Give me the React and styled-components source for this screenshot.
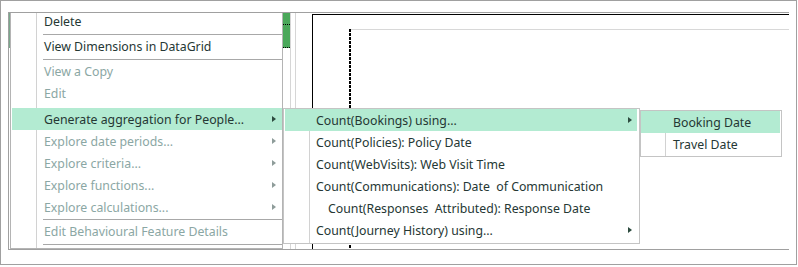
import React from 'react';
import styled, { createGlobalStyle } from 'styled-components';

const Global = createGlobalStyle`
  html, body { margin: 0; padding: 0; background: #fff; }
  body { font-family: "Noto Sans", "Open Sans", sans-serif; }
  #root { width: 798px; height: 267px; }
`;

const Frame = styled.div`
  width: 797px;
  height: 265px;
  box-sizing: border-box;
  border: 1px solid #a0a0a0;
  padding: 11px 0 0 7px;
  background: #fff;
`;

const Panel = styled.div`
  position: relative;
  overflow: hidden;
  width: 781px;
  height: 238px;
  box-sizing: border-box;
  border-top: 1px solid #a0a0a0;
  border-left: 1px solid #a0a0a0;
  border-bottom: 1px solid #a0a0a0;
  display: flex;
  align-items: stretch;
`;

const LeftPane = styled.div`
  width: 274px;
  flex: none;
`;

const LeftThumb = styled.div`
  width: 1px;
  height: 35px;
  background: #7aa88c;
`;

const ScrollCol = styled.div`
  display: flex;
  flex: none;
  margin-right: 16px;
`;

const Track = styled.div`
  width: ${p => p.$w}px;
  border-right: 1px solid #d6d6d6;
`;

const Thumb = styled.div`
  height: 35px;
  background: #4aa85a;
  border-bottom: 1px dotted #000;
  box-sizing: border-box;
  position: relative;
  &::before {
    content: "";
    position: absolute;
    left: 0;
    right: 0;
    top: 11px;
    border-top: 1px dotted #000;
  }
`;

const Canvas = styled.div`
  flex: 1;
  margin-top: 1px;
  border-top: 1px solid #000;
  border-left: 1px solid #000;
  padding: 14px 0 0 36px;
  display: flex;
`;

const Sheet = styled.div`
  flex: 1;
  display: flex;
`;

const DashedEdge = styled.div`
  width: 2px;
  flex: none;
  background: repeating-linear-gradient(to bottom, #000 0 3px, #fff 3px 4px);
`;

const SheetBody = styled.div`
  flex: 1;
  border-top: 1px solid #d8d8d8;
`;

const Menu = styled.div`
  position: absolute;
  left: ${p => p.$left}px;
  top: ${p => p.$top}px;
  width: ${p => p.$width}px;
  height: ${p => p.$height}px;
  box-sizing: border-box;
  border: 1px solid ${p => p.$border || '#c4c4c4'};
  padding-bottom: ${p => p.$pb || 0}px;
  background: #fff linear-gradient(to right, transparent ${p => p.$gutter}px, #d2d2d2 ${p => p.$gutter}px, #d2d2d2 ${p => p.$gutter + 1}px, transparent ${p => p.$gutter + 1}px);
  display: flex;
  flex-direction: column;
`;

const Item = styled.div`
  position: relative;
  height: 22px;
  line-height: 24px;
  flex: none;
  font-size: 12.3px;
  white-space: pre;
  padding-left: ${p => p.$pad}px;
  margin: 0 ${p => p.$mr || 0}px 0 ${p => p.$ml || 0}px;
  color: ${p => (p.$disabled ? '#8ba7a4' : '#253734')};
  background: ${p => (p.$active ? '#b3ebd2' : 'transparent')};
`;

const Arrow = styled.span`
  position: absolute;
  right: ${p => p.$right}px;
  top: 8px;
  width: 0;
  height: 0;
  border-top: 3px solid transparent;
  border-bottom: 3px solid transparent;
  border-left: 4px solid ${p => (p.$disabled ? '#8e9c9a' : '#2c4a3e')};
`;

const Separator = styled.div`
  flex: none;
  height: 1px;
  background: ${p => (p.$hidden ? 'transparent' : '#a8a8a8')};
  margin: ${p => p.$top}px 0 0 32px;
`;

const MAIN = [
  { t: 'Delete' },
  { sep: 2 },
  { t: 'View Dimensions in DataGrid' },
  { sep: 2 },
  { t: 'View a Copy', d: true },
  { t: 'Edit', d: true },
  { sep: 3, hidden: true },
  { t: 'Generate aggregation for People...', a: true, sub: true },
  { t: 'Explore date periods...', d: true, sub: true },
  { t: 'Explore criteria...', d: true, sub: true },
  { t: 'Explore functions...', d: true, sub: true },
  { t: 'Explore calculations...', d: true, sub: true },
  { sep: 1 },
  { t: 'Edit Behavioural Feature Details', d: true },
  { sep: 2 },
];

const SUB1 = [
  { t: 'Count(Bookings) using...', a: true, sub: true },
  { t: 'Count(Policies): Policy Date' },
  { t: 'Count(WebVisits): Web Visit Time' },
  { t: 'Count(Communications): Date  of Communication' },
  { t: 'Count(Responses  Attributed): Response Date', indent: 12 },
  { t: 'Count(Journey History) using...', sub: true },
];

const SUB2 = [{ t: 'Booking Date', a: true }, { t: 'Travel Date' }];

function renderItems(items, { pad, ml, mr, arrowRight }) {
  return items.map((it, i) =>
    it.sep !== undefined ? (
      <Separator key={i} $top={it.sep} $hidden={it.hidden} />
    ) : (
      <Item
        key={i}
        $pad={pad + (it.indent || 0)}
        $ml={ml}
        $mr={mr}
        $disabled={it.d}
        $active={it.a}
      >
        {it.t}
        {it.sub && <Arrow $right={arrowRight} $disabled={it.d} />}
      </Item>
    )
  );
}

export default function App() {
  return (
    <>
      <Global />
      <Frame>
        <Panel>
          <LeftPane>
            <LeftThumb />
          </LeftPane>
          <ScrollCol>
            <Track $w={7}>
              <Thumb />
            </Track>
            <Track $w={4} />
          </ScrollCol>
          <Canvas>
            <Sheet>
              <DashedEdge />
              <SheetBody />
            </Sheet>
          </Canvas>

          <Menu $left={1} $top={-4} $width={273} $height={240} $gutter={25} $border="#b4b4b4">
            {renderItems(MAIN, { pad: 32, ml: 1, mr: 0, arrowRight: 6 })}
          </Menu>
          <Menu $left={274} $top={95} $width={357} $height={136} $gutter={25}>
            {renderItems(SUB1, { pad: 31, ml: 1, mr: 2, arrowRight: 5 })}
          </Menu>
          <Menu $left={631} $top={97} $width={142} $height={47} $gutter={24}>
            {renderItems(SUB2, { pad: 32, ml: 0, mr: 1, arrowRight: 5 })}
          </Menu>
        </Panel>
      </Frame>
    </>
  );
}
